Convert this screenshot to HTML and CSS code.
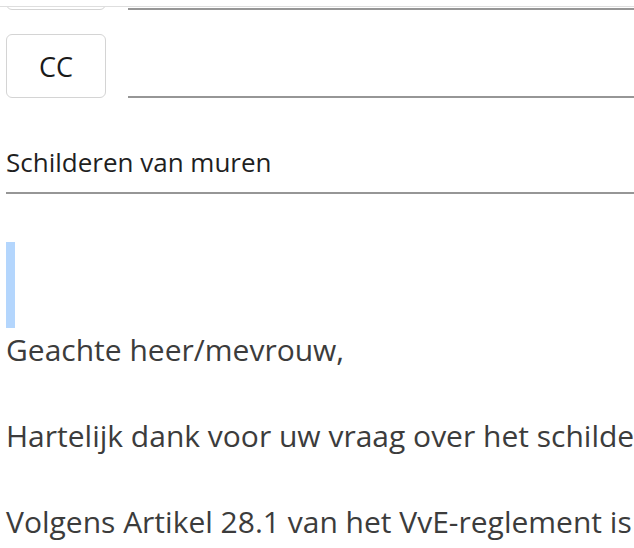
FILE: index.html
```html
<!DOCTYPE html>
<html lang="nl">
<head>
<meta charset="utf-8">
<title>Nieuw bericht</title>
<link rel="stylesheet" href="styles.css">
</head>
<body>
<div class="topbar"></div>
<main class="compose">
  <div class="row row-to">
    <button class="field-btn" type="button">Aan</button>
    <div class="field-input"></div>
  </div>
  <div class="row row-cc">
    <button class="field-btn" type="button">CC</button>
    <div class="field-input"></div>
  </div>
  <div class="subject">Schilderen van muren</div>
  <div class="editor">
    <div class="selection"></div>
    <div class="line">Geachte heer/mevrouw,</div>
    <div class="line"><br></div>
    <div class="line">Hartelijk dank voor uw vraag over het schilderen van muren.</div>
    <div class="line"><br></div>
    <div class="line">Volgens Artikel 28.1 van het VvE-reglement is het schilderen van muren toegestaan.</div>
  </div>
</main>
</body>
</html>
```
FILE: styles.css
```css
html, body {
  margin: 0;
  padding: 0;
  background: #fff;
  overflow: hidden;
}
body {
  width: 634px;
  height: 548px;
  font-family: "Open Sans", "Noto Sans", sans-serif;
}
.topbar {
  position: fixed;
  top: 0;
  left: 0;
  right: 0;
  height: 6px;
  background: #fff;
  border-bottom: 1px solid #dedede;
  z-index: 2;
}
.compose {
  padding-left: 6px;
}
.row {
  display: flex;
  align-items: flex-end;
  gap: 22px;
}
.row-to {
  margin-top: -54px;
}
.row-cc {
  margin-top: 24px;
}
.field-btn {
  flex: 0 0 auto;
  width: 100px;
  height: 64px;
  box-sizing: border-box;
  border: 1.5px solid #d4d4d4;
  border-radius: 6px;
  background: #fff;
  font-family: "Open Sans", "Noto Sans", sans-serif;
  font-size: 27px;
  color: #1a1a1a;
  padding: 0;
}
.field-input {
  flex: 1 1 auto;
  border-bottom: 2px solid #969696;
}
.subject {
  margin-top: 34px;
  height: 60px;
  line-height: 60px;
  font-size: 26px;
  color: #1f1f1f;
  border-bottom: 2px solid #969696;
  white-space: nowrap;
}
.editor {
  margin-top: 48px;
  font-size: 30px;
  line-height: 43px;
  color: #3c3c3c;
  white-space: nowrap;
}
.selection {
  width: 9px;
  height: 86px;
  background: #b4d6fd;
}
```
